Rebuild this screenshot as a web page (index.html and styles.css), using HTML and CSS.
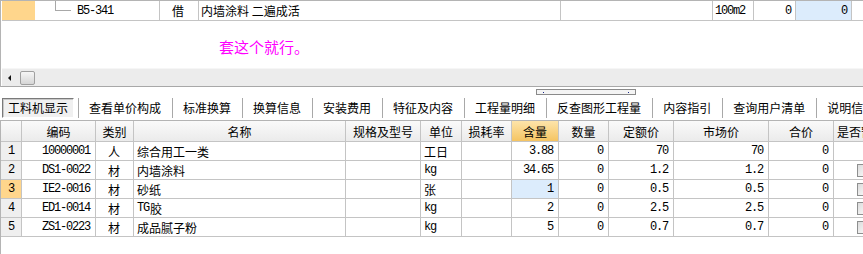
FILE: index.html
```html
<!DOCTYPE html>
<html lang="zh-CN">
<head>
    <meta charset="UTF-8">
    <title>工料机显示</title>
    <link rel="stylesheet" href="styles.css">
</head>
<body>
    <div class="upper">
        <div class="top-row">
            <div class="cell sel-mark"></div>
            <div class="cell code-cell"><span class="tree"></span><span class="mono">B5-341</span></div>
            <div class="cell center">借</div>
            <div class="cell">内墙涂料 二遍成活</div>
            <div class="cell"></div>
            <div class="cell mono">100m2</div>
            <div class="cell mono right">0</div>
            <div class="cell mono right blue">0</div>
            <div class="cell last"></div>
        </div>
        <div class="note">套这个就行。</div>
        <div class="hscroll">
            <span class="arrow-left"></span>
            <span class="thumb"></span>
        </div>
    </div>

    <div class="splitter"><span class="grip"><i></i><i></i></span></div>

    <div class="tabs">
        <span class="tab active">工料机显示</span>
        <span class="tab">查看单价构成</span>
        <span class="tab">标准换算</span>
        <span class="tab">换算信息</span>
        <span class="tab">安装费用</span>
        <span class="tab">特征及内容</span>
        <span class="tab">工程量明细</span>
        <span class="tab">反查图形工程量</span>
        <span class="tab">内容指引</span>
        <span class="tab">查询用户清单</span>
        <span class="tab">说明信息</span>
    </div>

    <div class="lower">
        <div class="grid">
            <div class="hd"></div>
            <div class="hd">编码</div>
            <div class="hd">类别</div>
            <div class="hd">名称</div>
            <div class="hd">规格及型号</div>
            <div class="hd">单位</div>
            <div class="hd">损耗率</div>
            <div class="hd hd-active">含量</div>
            <div class="hd">数量</div>
            <div class="hd">定额价</div>
            <div class="hd">市场价</div>
            <div class="hd">合价</div>
            <div class="hd hd-left">是否暂估</div>

            <div class="c num-col mono">1</div>
            <div class="c mono right">10000001</div>
            <div class="c center">人</div>
            <div class="c">综合用工一类</div>
            <div class="c"></div>
            <div class="c">工日</div>
            <div class="c"></div>
            <div class="c mono right">3.88</div>
            <div class="c mono right">0</div>
            <div class="c mono right">70</div>
            <div class="c mono right">70</div>
            <div class="c mono right">0</div>
            <div class="c"></div>

            <div class="c num-col mono">2</div>
            <div class="c mono right">DS1-0022</div>
            <div class="c center">材</div>
            <div class="c">内墙涂料</div>
            <div class="c"></div>
            <div class="c mono">kg</div>
            <div class="c"></div>
            <div class="c mono right">34.65</div>
            <div class="c mono right">0</div>
            <div class="c mono right">1.2</div>
            <div class="c mono right">1.2</div>
            <div class="c mono right">0</div>
            <div class="c chk-cell"><span class="chk"></span></div>

            <div class="c num-col cur mono">3</div>
            <div class="c mono right">IE2-0016</div>
            <div class="c center">材</div>
            <div class="c">砂纸</div>
            <div class="c"></div>
            <div class="c">张</div>
            <div class="c"></div>
            <div class="c mono right blue">1</div>
            <div class="c mono right">0</div>
            <div class="c mono right">0.5</div>
            <div class="c mono right">0.5</div>
            <div class="c mono right">0</div>
            <div class="c chk-cell"><span class="chk"></span></div>

            <div class="c num-col mono">4</div>
            <div class="c mono right">ED1-0014</div>
            <div class="c center">材</div>
            <div class="c"><span class="mono latin">TG</span>胶</div>
            <div class="c"></div>
            <div class="c mono">kg</div>
            <div class="c"></div>
            <div class="c mono right">2</div>
            <div class="c mono right">0</div>
            <div class="c mono right">2.5</div>
            <div class="c mono right">2.5</div>
            <div class="c mono right">0</div>
            <div class="c chk-cell"><span class="chk"></span></div>

            <div class="c num-col mono">5</div>
            <div class="c mono right">ZS1-0223</div>
            <div class="c center">材</div>
            <div class="c">成品腻子粉</div>
            <div class="c"></div>
            <div class="c mono">kg</div>
            <div class="c"></div>
            <div class="c mono right">5</div>
            <div class="c mono right">0</div>
            <div class="c mono right">0.7</div>
            <div class="c mono right">0.7</div>
            <div class="c mono right">0</div>
            <div class="c chk-cell"><span class="chk"></span></div>
        </div>
    </div>
</body>
</html>
```

FILE: styles.css
```css
body {
    margin: 0;
    background-color: #fff;
    color: #000;
    font: 12px "Noto Sans CJK SC", sans-serif;
    overflow: hidden;
}
.mono {
    font-family: "Liberation Mono", "Noto Sans CJK SC", monospace;
    font-size: 12px;
    letter-spacing: -1.2px;
}
.latin {
    margin-right: 1px;
}
.right {
    justify-content: flex-end;
}
.center {
    justify-content: center;
}
.blue {
    background-color: #dcecfc;
}

/* upper pane */
.upper {
    border-top: 1px solid #b4b4b4;
    border-left: 1px solid #b4b4b4;
    border-bottom: 1px solid #a8a8a8;
    padding-left: 1px;
}
.top-row {
    display: grid;
    grid-template-columns: 33px 125px 39px 362px 152px 41px 42px 56px 40px;
    height: 20px;
    border-bottom: 1px solid #c4c4c4;
    box-sizing: border-box;
}
.top-row .cell {
    display: flex;
    align-items: center;
    border-right: 1px solid #c4c4c4;
    padding: 0 4px 0 2px;
    white-space: nowrap;
    overflow: hidden;
}
.top-row .sel-mark {
    background-color: #ffd68c;
    border-right: none;
}
.top-row .code-cell {
    padding-left: 20px;
}
.tree {
    align-self: flex-start;
    width: 15px;
    height: 9px;
    border-left: 1px solid #a8a8a8;
    border-bottom: 1px solid #a8a8a8;
    margin-right: 6px;
    flex-shrink: 0;
}
.top-row .last {
    border-right: none;
}
.note {
    height: 47px;
    box-sizing: border-box;
    padding: 16px 0 0 217px;
    color: #ff00ff;
    font-size: 15px;
    line-height: 20px;
}
.hscroll {
    height: 17px;
    background-color: #ececec;
    border-top: 1px solid #f6f6f6;
    display: flex;
    align-items: center;
}
.arrow-left {
    width: 0;
    height: 0;
    border-top: 3px solid transparent;
    border-bottom: 3px solid transparent;
    border-right: 3px solid #111;
    margin-left: 6px;
}
.thumb {
    width: 15px;
    height: 14px;
    box-sizing: border-box;
    margin-left: 9px;
    border: 1px solid #a0a0a0;
    border-radius: 2px;
    background: linear-gradient(#f6f6f6, #d6d6d6);
}

/* splitter */
.splitter {
    height: 7px;
    padding-left: 536px;
}
.grip {
    display: flex;
    justify-content: space-between;
    align-items: center;
    width: 100px;
    height: 6px;
    box-sizing: border-box;
    margin-top: 2px;
    padding: 0 6px;
    border: 1px solid #8a8a8a;
    background-color: #f4f4f4;
}
.grip i {
    width: 1px;
    height: 1px;
    background-color: #1a2a8a;
}

/* tabs */
.tabs {
    height: 24px;
    display: flex;
    align-items: center;
    padding-left: 2px;
    white-space: nowrap;
}
.tab {
    height: 20px;
    line-height: 20px;
    padding: 0 11px 0 10px;
    border-left: 1px solid #a8a8a8;
}
.tab.active {
    border: 1px solid;
    border-color: #7a7a7a #ffffff #ffffff #7a7a7a;
    box-shadow: inset 1px 1px 0 #c8c8c8;
    background-color: #f0f0f0;
    box-sizing: border-box;
    line-height: 18px;
    padding: 0 5px;
    margin-right: 4px;
}
.tab.active + .tab {
    border-left: 1px solid #a8a8a8;
}

/* grid */
.lower {
    border-top: 1px solid #b4b4b4;
    border-left: 1px solid #b4b4b4;
    height: 140px;
    overflow: hidden;
}
.grid {
    display: grid;
    grid-template-columns: 21px 74px 38px 212px 75px 41px 50px 47px 50px 65px 95px 65px 70px;
    grid-template-rows: 21px repeat(5, 19px);
}
.hd, .c {
    display: flex;
    align-items: center;
    box-sizing: border-box;
    border-right: 1px solid #c4c4c4;
    border-bottom: 1px solid #c4c4c4;
    white-space: nowrap;
    overflow: hidden;
}
.hd {
    justify-content: center;
    background: linear-gradient(#fafafa, #ebebeb);
    font-size: 12px;
}
.hd-active {
    background: linear-gradient(#fde4aa, #f5c462);
}
.hd-left {
    justify-content: flex-start;
    padding-left: 3px;
}
.c {
    padding: 0 4px 0 3px;
}
.c.right {
    padding-right: 5px;
}
.num-col {
    justify-content: center;
    background-color: #efefef;
    padding: 0;
}
.num-col.cur {
    background-color: #ffd68c;
}
.chk-cell {
    padding-left: 23px;
}
.chk {
    width: 13px;
    height: 13px;
    box-sizing: border-box;
    border: 1px solid #8e8f8f;
    background: linear-gradient(135deg, #dcdcdc, #fdfdfd);
    flex-shrink: 0;
}
```
